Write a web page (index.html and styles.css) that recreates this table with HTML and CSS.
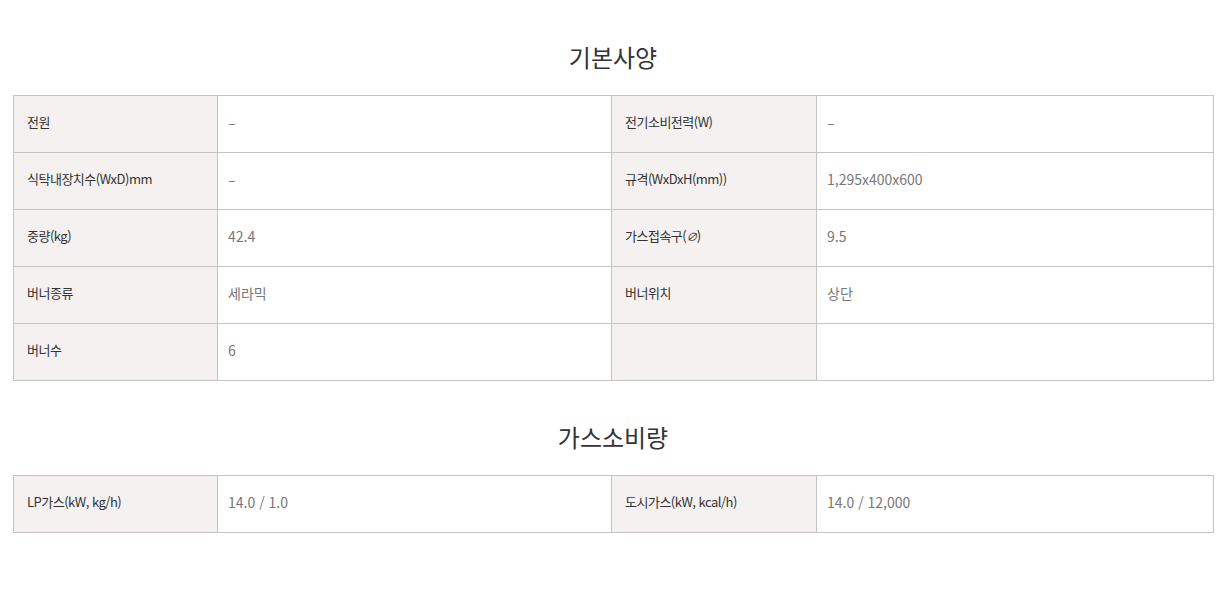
FILE: index.html
```html
<!DOCTYPE html>
<html lang="ko">
<head>
<meta charset="utf-8">
<link rel="stylesheet" href="styles.css">
</head>
<body>
<div class="wrap">
  <section class="spec">
    <h2 class="title">기본사양</h2>
    <table class="tbl">
      <colgroup><col class="c1"><col class="c2"><col class="c3"><col class="c4"></colgroup>
      <tr><th>전원</th><td>–</td><th>전기소비전력(W)</th><td>–</td></tr>
      <tr><th>식탁내장치수(WxD)mm</th><td>–</td><th>규격(WxDxH(mm))</th><td>1,295x400x600</td></tr>
      <tr><th>중량(kg)</th><td>42.4</td><th>가스접속구(<span class="phi">&#8709;</span>)</th><td>9.5</td></tr>
      <tr><th>버너종류</th><td>세라믹</td><th>버너위치</th><td>상단</td></tr>
      <tr><th>버너수</th><td>6</td><th></th><td></td></tr>
    </table>
  </section>
  <section class="spec second">
    <h2 class="title">가스소비량</h2>
    <table class="tbl">
      <colgroup><col class="c1"><col class="c2"><col class="c3"><col class="c4"></colgroup>
      <tr><th>LP가스(kW, kg/h)</th><td>14.0 / 1.0</td><th>도시가스(kW, kcal/h)</th><td>14.0 / 12,000</td></tr>
    </table>
  </section>
</div>
</body>
</html>
```
FILE: styles.css
```css
html, body { margin: 0; padding: 0; background: #fff; }
body { font-family: "Noto Sans CJK KR", "Noto Sans", sans-serif; color: #333; }
.wrap { width: 1200px; margin-left: 13px; padding-top: 40px; }
.title { margin: 0 0 21px; text-align: center; font-size: 24px; font-weight: 400; line-height: 34px; color: #333; }
.second { margin-top: 39px; }
.tbl { width: 1200px; border-collapse: collapse; table-layout: fixed; }
.c1 { width: 204px; }
.c2 { width: 394px; }
.c3 { width: 205px; }
.c4 { width: 397px; }
.tbl th, .tbl td { border: 1px solid #c4c4c4; height: 57px; padding: 0 0 5px; box-sizing: border-box; text-align: left; vertical-align: middle; }
.tbl th { background: #f4f1f0; font-weight: 400; font-size: 13px; color: #333; padding-left: 13px; letter-spacing: -0.5px; }
.tbl td { font-size: 14px; color: #777; padding-left: 10px; }
.phi { font-style: italic; font-size: 11px; }
```
